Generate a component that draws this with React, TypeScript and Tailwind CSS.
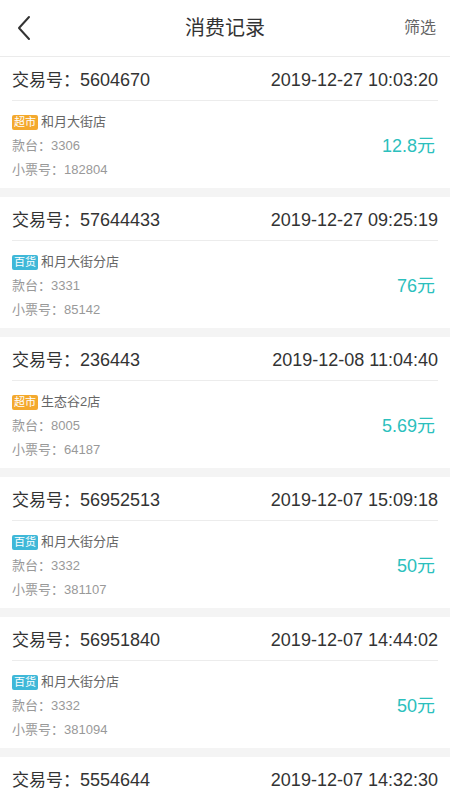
type Item = {
  id: string;
  time: string;
  tag: "超市" | "百货";
  store: string;
  counter: string;
  ticket: string;
  amount: string;
};

const items: Item[] = [
  { id: "5604670", time: "2019-12-27 10:03:20", tag: "超市", store: "和月大街店", counter: "3306", ticket: "182804", amount: "12.8" },
  { id: "57644433", time: "2019-12-27 09:25:19", tag: "百货", store: "和月大街分店", counter: "3331", ticket: "85142", amount: "76" },
  { id: "236443", time: "2019-12-08 11:04:40", tag: "超市", store: "生态谷2店", counter: "8005", ticket: "64187", amount: "5.69" },
  { id: "56952513", time: "2019-12-07 15:09:18", tag: "百货", store: "和月大街分店", counter: "3332", ticket: "381107", amount: "50" },
  { id: "56951840", time: "2019-12-07 14:44:02", tag: "百货", store: "和月大街分店", counter: "3332", ticket: "381094", amount: "50" },
  { id: "5554644", time: "2019-12-07 14:32:30", tag: "百货", store: "和月大街分店", counter: "3332", ticket: "381090", amount: "50" },
];

function Card({ item }: { item: Item }) {
  return (
    <div className="bg-white px-3">
      {/* trade number + time */}
      <div className="h-[44px] pt-1 flex items-center justify-between text-[#333] border-b border-[#ececec]">
        <span className="text-[17px]">
          交易号：<span className="text-[18px]">{item.id}</span>
        </span>
        <span className="text-[18px]">{item.time}</span>
      </div>
      <div className="flex items-center justify-between pt-[9px] pb-[6px]">
        <div className="flex flex-col">
          <div className="h-6 flex items-center">
            <span
              className={
                item.tag === "超市"
                  ? "bg-[#f4a92d] text-white text-[11px] leading-[15px] px-[2px] rounded-[2px]"
                  : "bg-[#3fb8d8] text-white text-[11px] leading-[15px] px-[2px] rounded-[2px]"
              }
            >
              {item.tag}
            </span>
            <span className="ml-[3px] text-[13px] text-[#666]">{item.store}</span>
          </div>
          <div className="h-6 flex items-center text-[13px] text-[#999]">款台：{item.counter}</div>
          <div className="h-6 flex items-center text-[13px] text-[#999]">小票号：{item.ticket}</div>
        </div>
        <span className="text-[18px] text-[#2cc0bd] mr-[3px]">{item.amount}元</span>
      </div>
    </div>
  );
}

export default function App() {
  return (
    <div
      className="w-[450px] h-[800px] overflow-hidden bg-[#f4f4f4]"
      style={{ fontFamily: '"Liberation Sans", "Noto Sans CJK SC", sans-serif' }}
    >
      <div className="h-[57px] bg-white border-b border-[#ebebeb] flex items-center px-[14px]">
        <div className="flex-1 flex items-center">
          <svg width="22" height="26" viewBox="0 0 22 26" fill="none" stroke="#333" strokeWidth="2" strokeLinecap="round" strokeLinejoin="round">
            <path d="M15 2 L5 13 L15 24" />
          </svg>
        </div>
        <span className="text-[20px] text-[#333]">消费记录</span>
        <div className="flex-1 flex justify-end">
          <span className="text-[16px] text-[#666]">筛选</span>
        </div>
      </div>
      <div className="flex flex-col gap-[9px]">
        {items.map((it) => (
          <Card key={it.id} item={it} />
        ))}
      </div>
    </div>
  );
}
